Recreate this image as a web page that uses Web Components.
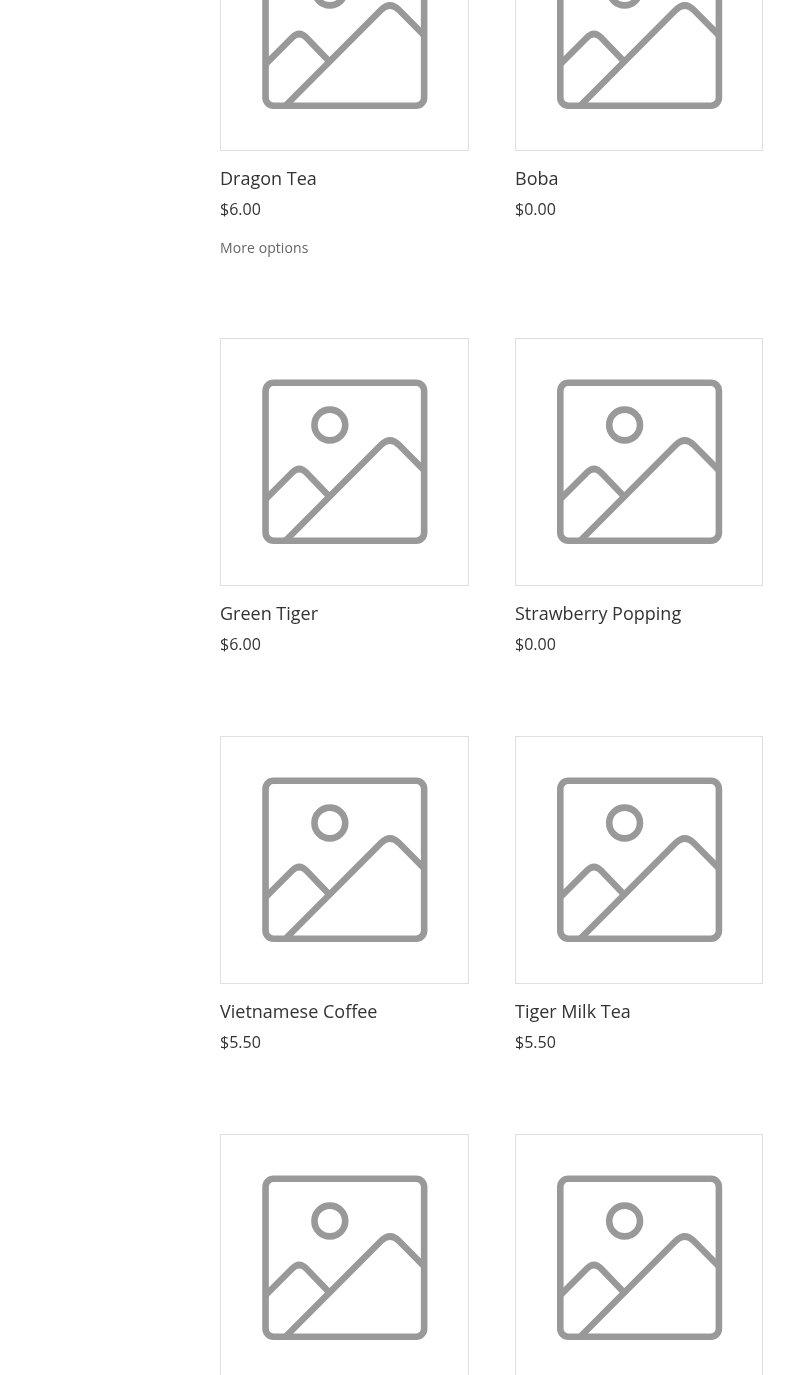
<!DOCTYPE html>
<html>
<head>
<meta charset="utf-8">
<title>Shop</title>
<style>
  html, body { margin: 0; padding: 0; background: #fff; overflow: hidden; height: 100%; }
  body { font-family: "Open Sans", sans-serif; }
</style>
</head>
<body>
<shop-page>
  <product-card name="Dragon Tea" price="$6.00" more></product-card>
  <product-card name="Boba" price="$0.00"></product-card>
  <product-card name="Green Tiger" price="$6.00"></product-card>
  <product-card name="Strawberry Popping" price="$0.00"></product-card>
  <product-card name="Vietnamese Coffee" price="$5.50"></product-card>
  <product-card name="Tiger Milk Tea" price="$5.50"></product-card>
  <product-card></product-card>
  <product-card></product-card>
</shop-page>

<script>
const pageTemplate = document.createElement("template");
pageTemplate.innerHTML = `
  <style>
    :host {
      display: block;
      /* the photo is taken scrolled down, the first row is cut off at the top */
      margin-top: -97px;
      padding: 0 22px 0 220px;
    }
    .grid {
      display: grid;
      grid-template-columns: 248.5px 248px;
      column-gap: 46.5px;
      row-gap: 80px;
    }
  </style>
  <div class="grid"><slot></slot></div>
`;

const placeholderTemplate = document.createElement("template");
placeholderTemplate.innerHTML = `
  <style>
    :host {
      display: block;
      height: 248px;
      box-sizing: border-box;
      border: 1px solid #dfdfdf;
    }
    svg { display: block; width: 100%; height: 100%; }
  </style>
  <svg viewBox="0 0 246 246" fill="none" stroke="#999" stroke-width="6.6">
    <rect x="44.3" y="43.7" width="158.6" height="158" rx="8"/>
    <circle cx="108.6" cy="86" r="15.4"/>
    <path d="M64.5 201.5 L159.7 106 Q168.8 97 177.8 106 L203 131.5"/>
    <path d="M44 160.5 L71 133.5 Q78 126.5 85 133.5 L110 159.5"/>
  </svg>
`;

const cardTemplate = document.createElement("template");
cardTemplate.innerHTML = `
  <style>
    :host { display: block; color: #333; will-change: transform; }
    .title { font-size: 18px; line-height: 26px; margin: 14px 0 0; font-weight: 400; }
    .price { font-size: 16px; line-height: 24px; margin: 6px 0 0; }
    .more { display: block; font-size: 14px; line-height: 20px; letter-spacing: .08px; margin: 17px 0 0; color: #666; text-decoration: none; }
  </style>
  <placeholder-image></placeholder-image>
  <h2 class="title"></h2>
  <div class="price"></div>
  <a class="more" href="#">More options</a>
`;

customElements.define(
  "shop-page",
  class extends HTMLElement {
    constructor() {
      super();
      this.attachShadow({ mode: "open" });
      this.shadowRoot.appendChild(pageTemplate.content.cloneNode(true));
    }
  }
);

customElements.define(
  "placeholder-image",
  class extends HTMLElement {
    constructor() {
      super();
      this.attachShadow({ mode: "open" });
      this.shadowRoot.appendChild(placeholderTemplate.content.cloneNode(true));
    }
  }
);

customElements.define(
  "product-card",
  class extends HTMLElement {
    constructor() {
      super();
      this.attachShadow({ mode: "open" });
      this.shadowRoot.appendChild(cardTemplate.content.cloneNode(true));
    }

    connectedCallback() {
      this.shadowRoot.querySelector(".title").innerText = this.getAttribute("name") || "";
      this.shadowRoot.querySelector(".price").innerText = this.getAttribute("price") || "";
      if (!this.hasAttribute("more")) {
        this.shadowRoot.querySelector(".more").remove();
      }
    }
  }
);
</script>
</body>
</html>
